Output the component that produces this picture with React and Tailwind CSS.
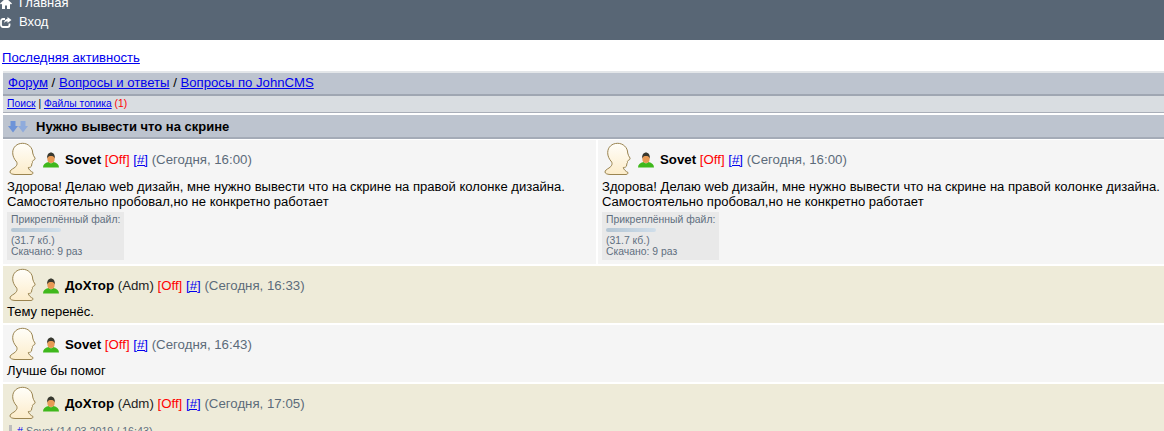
const link = "text-[#0000ee] underline"

function Avatar() {
  return (
    <svg width="32" height="34" viewBox="0 0 32 34" className="shrink-0">
      <defs>
        <linearGradient id="face" x1="0" y1="0" x2="0" y2="1">
          <stop offset="0" stopColor="#fffef9" />
          <stop offset="1" stopColor="#fcecca" />
        </linearGradient>
      </defs>
      <path
        transform="translate(2 0)"
        d="M13.700 1.300C8 1.300 3.700 5 3.700 10.700 3.700 14 5 17 7.700 20 8.500 22 8 24 5 26 2.500 27.500 1 28.500 1 30 1 31.500 3 32.300 6 32.500L22 32.500C23.500 32.200 24.300 31.500 24 30.500 22 29.500 19.500 27.500 19.300 25.500 21 25.500 22.700 25 22.700 23 22.500 22 23 21.500 23.500 20.500 23 19.500 23.800 19.200 24 18.500 25 18 26.500 17.500 26 16 25 14.500 24 13 23.700 11 23.700 5.500 19 1.300 13.700 1.300Z"
        fill="url(#face)"
        stroke="#9a8450"
        strokeWidth="1"
      />
    </svg>
  )
}

function UserIcon() {
  return (
    <svg width="16" height="16" viewBox="0 0 16 16" className="shrink-0">
      <path d="M0 15.500C0 12.500 2 10.800 5.500 10L8 11.500 10.500 10C14 10.800 16 12.500 16 15.500z" fill="#3fb81c" />
      <ellipse cx="8" cy="6.500" rx="3.700" ry="4.500" fill="#e89a55" />
      <path d="M4.200 6.500C3.700 2.500 6 0.500 8 0.500s4.300 2 3.800 6C11 4.500 10 4 8 4s-3 .5-3.800 2.500z" fill="#37382f" />
    </svg>
  )
}

function PostHead({ name, role, time }) {
  return (
    <div className="flex items-center h-[35px]">
      <Avatar />
      <div className="ml-[4px] mt-[3px]"><UserIcon /></div>
      <div className="ml-[6px] mt-[2px] text-[13.25px] whitespace-nowrap">
        <b className="text-black">{name}</b>
        {role && <span className="text-[#222]"> {role}</span>}
        <span className="text-[#ff0000]"> [Off]</span>{" "}
        <span className={link}>[#]</span>{" "}
        <span className="text-[#5c6b7a]">({time})</span>
      </div>
    </div>
  )
}

function Attachment() {
  return (
    <div className="w-[117px] h-[48px] mt-[3px] bg-[#e9e9e9] pl-[4px] pt-[2px] text-[10.4px] leading-[11px] text-[#5f6f7f]">
      <div className="h-[12px]">Прикреплённый файл:</div>
      <div className="w-[50px] h-[4px] my-[2px] bg-gradient-to-r from-[#b4c6d4] to-[#d0deea] rounded-sm" />
      <div className="h-[11px] mt-[3px]">(31.7 кб.)</div>
      <div>Скачано: 9 раз</div>
    </div>
  )
}

function FirstPost({ className }) {
  return (
    <div className={`bg-[#f5f5f5] h-[124px] pl-[4px] pt-[1px] overflow-hidden ${className}`}>
      <PostHead name="Sovet" time="Сегодня, 16:00" />
      <div className="text-[13.05px] leading-[15px] mt-[3px] text-black whitespace-nowrap">
        <div>Здорова! Делаю web дизайн, мне нужно вывести что на скрине на правой колонке дизайна.</div>
        <div>Самостоятельно пробовал,но не конкретно работает</div>
      </div>
      <Attachment />
    </div>
  )
}

function Post({ tint, name, role, time, text }) {
  return (
    <div className={`${tint ? "bg-[#eeebd9]" : "bg-[#f5f5f5]"} h-[57px] mt-[2px] pl-[4px] pt-[1px]`}>
      <PostHead name={name} role={role} time={time} />
      <div className="text-[13px] leading-[15px] mt-[2px] text-black">{text}</div>
    </div>
  )
}

export default function App() {
  return (
    <div className="h-[431px] w-[1164px] overflow-hidden bg-white font-['Liberation_Sans',sans-serif] text-[13px]">
      <div className="h-[40px] bg-[#586675] overflow-hidden text-white">
        <div className="flex items-center h-[18px] -mt-[6px]">
          <svg width="12" height="12" viewBox="0 0 12 12">
            <path d="M6 1 0 6.500 1 7.500 2 6.700V12h3V8.500h2V12h3V6.700l1 .8 1-1z" fill="#fff" />
          </svg>
          <span className="ml-[7px]">Главная</span>
        </div>
        <div className="flex items-center h-[20px]">
          <svg width="12" height="12" viewBox="0 0 12 12" fill="none">
            <path d="M9.500 7.500V9a2 2 0 0 1-2 2H3a2 2 0 0 1-2-2V5a2 2 0 0 1 2-2h2" stroke="#fff" strokeWidth="1.800" />
            <path d="M7.500 1 11.500 4 7.500 7V5.300C5.500 5.300 4.500 6 4 7.500 4 5 5.500 2.800 7.500 2.700z" fill="#fff" />
          </svg>
          <span className="ml-[7px]">Вход</span>
        </div>
      </div>

      <div className="h-[31px] pl-[2px] pt-[10px] leading-[15px] text-[13.1px]">
        <span className={link}>Последняя активность</span>
      </div>

      <div className="ml-[3px] border-t-[2px] border-[#e3e6e9]">
        <div className="h-[23px] bg-[#bdc4cf] border-b-[2px] border-[#9fa6b2] pl-[5px] pt-[2px] leading-[15px] text-[13.15px] text-black">
          <span className={link}>Форум</span> / <span className={link}>Вопросы и ответы</span> / <span className={link}>Вопросы по JohnCMS</span>
        </div>
        <div className="h-[17px] bg-[#d9dde1] border-b border-[#a9aeb8] pl-[4px] pt-[1px] text-[10.3px] leading-[13px] text-black">
          <span className={link}>Поиск</span> | <span className={link}>Файлы топика</span> <span className="text-[#ff0000]">(1)</span>
        </div>
        <div className="flex items-center h-[24px] mt-[2px] pt-[1px] bg-[#bdc4cf] border-b-[2px] border-[#a4abb7] pl-[5px] font-bold text-black">
          <svg width="20" height="12" viewBox="0 0 20 12">
            <path d="M2.500 0H7.500V5H10L5 11.500 0 5H2.500z" fill="#6d93d8" />
            <path d="M12.500 0H17.500V5H20L15 11.500 10 5H12.500z" fill="#8fabdc" />
          </svg>
          <span className="ml-[8px]">Нужно вывести что на скрине</span>
        </div>

        <div className="flex mt-[1px]">
          <FirstPost className="w-[593px] shrink-0" />
          <FirstPost className="ml-[2px] flex-1" />
        </div>

        <Post tint name="ДоХтор" role="(Adm)" time="Сегодня, 16:33" text="Тему перенёс." />
        <Post name="Sovet" time="Сегодня, 16:43" text="Лучше бы помог" />
        <div className="h-[60px] mt-[2px] bg-[#eeebd9] pl-[4px] pt-[1px] overflow-hidden">
          <PostHead name="ДоХтор" role="(Adm)" time="Сегодня, 17:05" />
          <div className="ml-[2px] mt-[5px] border-l-[3px] border-[#bdbdbd] pl-[5px] text-[10.7px] leading-[12px] text-[#5f6f7f]">
            <span className={link}>#</span> Sovet (14.03.2019 / 16:43)
          </div>
        </div>
      </div>
    </div>
  )
}
